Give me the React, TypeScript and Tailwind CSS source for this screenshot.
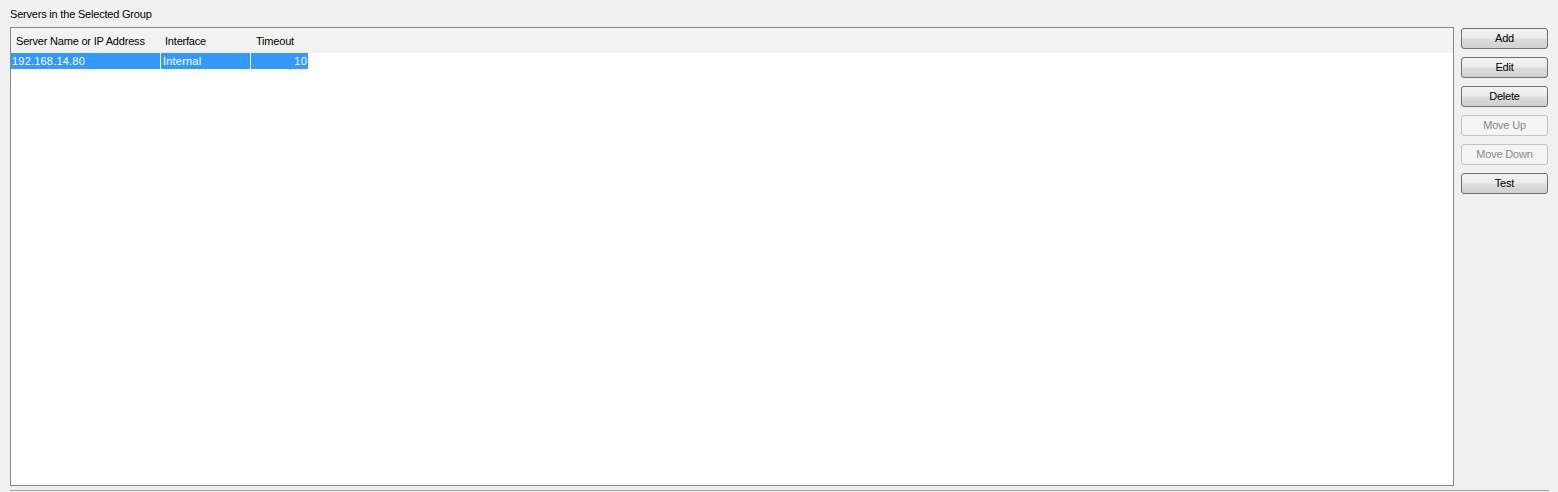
import React from "react";

const font = { fontFamily: '"Liberation Sans", Arial, sans-serif' };

function Btn({ label, disabled }: { label: string; disabled?: boolean }) {
  return (
    <div
      className={
        disabled
          ? "w-[87px] h-[21px] rounded-[3px] border border-[#c2c4c6] bg-[#f4f4f4] text-[#8a8a8a] text-[11px] leading-[19px] text-center tracking-[-0.2px]"
          : "w-[87px] h-[21px] rounded-[3px] border border-[#707070] bg-[#e6e6e6] text-black text-[11px] leading-[19px] text-center tracking-[-0.2px]"
      }
      style={disabled ? undefined : { backgroundImage: "linear-gradient(to bottom, #f3f3f3 0%, #ebebeb 48%, #dddddd 52%, #d0d0d0 100%)" }}
    >
      {label}
    </div>
  );
}

export default function App() {
  return (
    <div className="w-[1558px] h-[492px] bg-[#f0f0f0] overflow-hidden text-black tracking-[-0.2px]" style={font}>
      <div className="pl-[10px] pt-[7px] h-[27px] text-[11px] leading-[14px]">Servers in the Selected Group</div>
      <div className="flex">
        <div className="ml-[10px] w-[1444px] h-[459px] border border-[#828790] bg-white flex flex-col">
          <div className="h-[25px] pt-[2px] bg-[#f2f2f2] flex items-center text-[11px]">
            <div className="w-[150px] pl-[5px]">Server Name or IP Address</div>
            <div className="w-[90px] pl-[4px]">Interface</div>
            <div className="w-[57px] pl-[5px]">Timeout</div>
          </div>
          <div className="h-[16px] flex text-[11px] leading-[16px] text-white tracking-[0.2px]">
            <div className="w-[150px] pl-[1px] bg-[#3399ff] border-r border-white">192.168.14.80</div>
            <div className="w-[90px] pl-[2px] bg-[#3399ff] border-r border-white">Internal</div>
            <div className="w-[57px] pr-[1px] bg-[#3399ff] text-right">10</div>
          </div>
        </div>
        <div className="ml-[7px] pt-[1px] flex flex-col gap-[8px]">
          <Btn label="Add" />
          <Btn label="Edit" />
          <Btn label="Delete" />
          <Btn label="Move Up" disabled />
          <Btn label="Move Down" disabled />
          <Btn label="Test" />
        </div>
      </div>
      <div className="ml-[10px] mt-[4px] w-[1539px] h-[1px] bg-[#a0a0a0]" />
    </div>
  );
}
